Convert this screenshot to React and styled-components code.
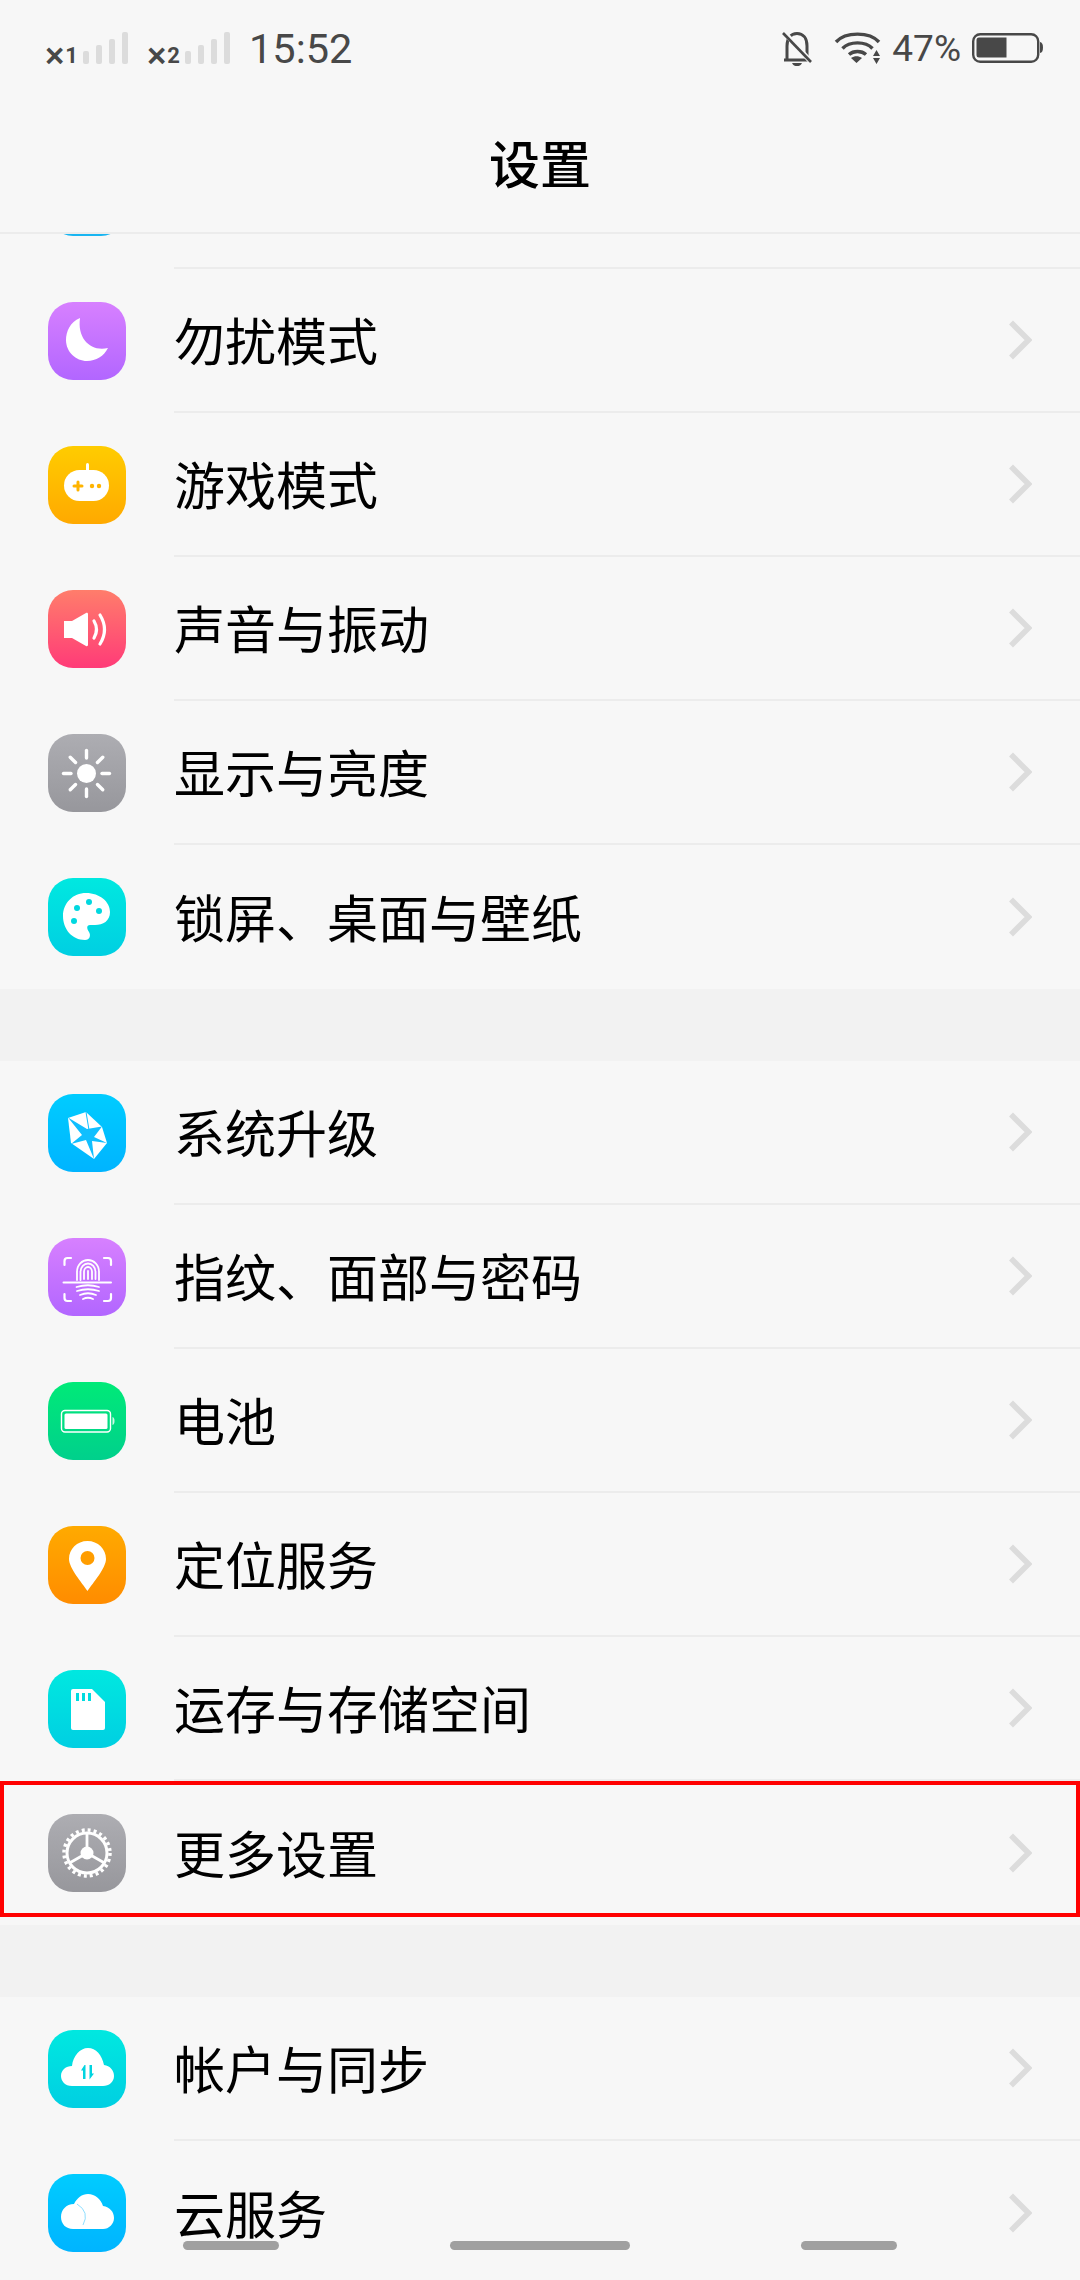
import React from 'react'
import styled, { createGlobalStyle } from 'styled-components'

const GlobalStyle = createGlobalStyle`
  html, body {
    margin: 0;
    padding: 0;
    background: #f7f7f7;
  }
  * {
    box-sizing: border-box;
  }
`

const Phone = styled.div`
  position: relative;
  width: 1080px;
  height: 2280px;
  overflow: hidden;
  display: flex;
  flex-direction: column;
  background: #f7f7f7;
  font-family: "Noto Sans CJK SC", "Noto Sans", sans-serif;
`
const StatusBar = styled.div`
  height: 96px;
  flex: none;
  display: flex;
  justify-content: space-between;
  align-items: flex-start;
  padding: 32px 37px 0 45px;
  color: #484848;
  font-family: Roboto, "Liberation Sans", sans-serif;
`
const StatusLeft = styled.div`
  display: flex;
  align-items: flex-end;
  height: 32px;
`
const StatusRight = styled.div`
  display: flex;
  align-items: flex-start;
  height: 34px;
`
const SimLabel = styled.span`
  display: flex;
  align-items: flex-end;
  width: 38px;
  height: 17px;
  font-size: 22px;
  font-weight: 700;
  line-height: 17px;
  white-space: nowrap;
  color: #484848;
`
const SimCross = styled.span`
  font-family: "Liberation Sans", sans-serif;
  font-size: 33px;
  line-height: 17px;
  margin-right: 1px;
`
const Bars = styled.div`
  display: flex;
  align-items: flex-end;
  gap: 7px;
  height: 32px;
  margin-right: 19px;
`
const Bar = styled.i`
  display: block;
  width: 6px;
  height: ${props => props.h}px;
  border-radius: 2px;
  background: #dcdcdc;
`
const Clock = styled.span`
  font-size: 41.5px;
  line-height: 32px;
  margin-bottom: -1px;
`
const Percent = styled.span`
  font-size: 37px;
  line-height: 34px;
  margin: 0 11px 0 11px;
`
const BellIcon = styled.svg`
  width: 32px;
  height: 34px;
  margin-right: 21px;
`
const WifiIcon = styled.svg`
  width: 47px;
  height: 32px;
`
const BatteryIcon = styled.svg`
  width: 71px;
  height: 30px;
  margin-top: 1px;
`
const Header = styled.header`
  height: 138px;
  flex: none;
  display: flex;
  align-items: center;
  justify-content: center;
  padding-bottom: 5px;
  border-bottom: 2px solid #ececec;
`
const Title = styled.h1`
  margin: 0;
  font-size: 51px;
  font-weight: 500;
  color: #000;
`
const Scroller = styled.main`
  flex: 1;
  overflow: hidden;
`
const List = styled.div`
  margin-top: -109px;
`
const Gap = styled.div`
  height: 72px;
  background: #f2f2f2;
`
const Row = styled.div`
  position: relative;
  height: 144px;
  display: flex;
  align-items: center;
  padding-left: 48px;
`
const IconTile = styled.div`
  flex: none;
  width: 78px;
  height: 78px;
  border-radius: 25px;
  background: linear-gradient(180deg, ${props => props.from}, ${props => props.to});
  svg {
    display: block;
    width: 78px;
    height: 78px;
  }
`
const RowBody = styled.div`
  align-self: stretch;
  flex: 1;
  margin-left: 48px;
  padding-right: 48px;
  display: flex;
  align-items: center;
  justify-content: space-between;
  border-bottom: ${props => props.last ? 'none' : '2px solid #ececec'};
`
const Label = styled.span`
  font-size: 51px;
  font-weight: 400;
  line-height: 60px;
  margin-top: -3px;
  color: #000;
`
const Chevron = styled.svg`
  width: 24px;
  height: 40px;
  flex: none;
`
const Highlight = styled.div`
  position: absolute;
  left: 0;
  right: 0;
  top: 0;
  height: 136px;
  border: 4px solid #f00;
  pointer-events: none;
`
const NavHints = styled.div`
  position: absolute;
  left: 183px;
  right: 183px;
  bottom: 30px;
  display: flex;
  justify-content: space-between;
`
const NavHint = styled.span`
  display: block;
  width: ${props => props.w}px;
  height: 9px;
  border-radius: 5px;
  background: #a0a0a0;
`

const Moon = () => (
  <svg viewBox="0 0 78 78">
    <path fill="#fff" d="M32 16C22 20 18 30 18 38C18 50 28 59 39 59C48 59 56 54 60 46C43 50 29 37 32 16Z" />
  </svg>
)

const Gamepad = () => (
  <svg viewBox="0 0 78 78">
    <rect x="38" y="17" width="3" height="9" rx="1.5" fill="#fff" />
    <rect x="16" y="24" width="45" height="31" rx="15.5" fill="#fff" />
    <path stroke="#ffb400" strokeWidth="3" strokeLinecap="round" d="M26 40H34M30 36V44" />
    <circle cx="44" cy="40" r="2.2" fill="#ffb400" />
    <circle cx="51" cy="40" r="2.2" fill="#ffb400" />
  </svg>
)

const Speaker = () => (
  <svg viewBox="0 0 78 78">
    <path fill="#fff" d="M16 31H24L38 23C39 22.500 40 23 40 24V55C40 56 39 56.500 38 56L24 48H16Z" />
    <path fill="none" stroke="#fff" strokeWidth="3.200" strokeLinecap="round" d="M46 31Q51 39.500 46 48M52 25Q61 39.500 52 54" />
  </svg>
)

const Sun = () => {
  const rays = [0, 45, 90, 135, 180, 225, 270, 315]
  return (
    <svg viewBox="0 0 78 78">
      <circle cx="38.500" cy="39.500" r="9.500" fill="#fff" />
      {rays.map(r => (
        <path
          key={r}
          transform={`rotate(${r} 38.500 39.500)`}
          stroke="#fff"
          strokeWidth="3.400"
          strokeLinecap="round"
          d="M38.500 24V16.500"
        />
      ))}
    </svg>
  )
}

const Palette = () => (
  <svg viewBox="0 0 78 78">
    <path fill="#fff" d="M38 15C52 15 62 24 62 34C62 43 55 47 47 47H42C38 47 39 51 41 54C43 57 42 62 37 62C24 62 15 51 15 38C15 25 25 15 38 15Z" />
    <circle cx="29" cy="30" r="3" fill="#00d8e0" />
    <circle cx="41" cy="24" r="3" fill="#00d8e0" />
    <circle cx="51" cy="33" r="3" fill="#00d8e0" />
    <circle cx="26" cy="43" r="3" fill="#00d8e0" />
  </svg>
)

const Crystal = () => (
  <svg viewBox="0 0 78 78">
    <path fill="#fff" d="M20 24L38 18L54 33L59 49L46 65L23 49Z" />
    <path fill="#10bfff" d="M20 23.500L39 35L54 32.500L46 43L59 49L44 47L46 65L38 46L23 50L34 41Z" />
    <path stroke="#10bfff" strokeWidth="1" d="M38 18L41 36" />
  </svg>
)

const Fingerprint = () => (
  <svg viewBox="0 0 78 78">
    <g fill="none" stroke="#fff" strokeWidth="1.800" strokeLinecap="round">
      <path strokeWidth="2.200" d="M16.500 27V23Q16.500 20 19.500 20H23M56 20H60Q63 20 63 23V27M16.500 56V60Q16.500 63 19.500 63H23M56 63H60Q63 63 63 60V56" />
      <path strokeWidth="2" d="M15.500 44.500H63" />
      <path d="M29 42V34C29 27 34 22 40 22C46 22 51 27 51 34V42" />
      <path d="M32.500 42V34C32.500 29 36 25.500 40 25.500C44 25.500 47.500 29 47.500 34V41" />
      <path d="M36 41V34C36 31 38 29 40 29C42 29 44 31 44 34V41" />
      <path d="M40 33V41" />
      <path d="M28.500 49Q40 45.500 51 49M29 53Q40 49.500 51 53M32 57Q40 53.500 48 57M35 61Q40 58.500 45 61" />
    </g>
  </svg>
)

const BatteryTile = () => (
  <svg viewBox="0 0 78 78">
    <rect x="13.500" y="28.500" width="49" height="21.500" rx="3.500" fill="none" stroke="#fff" strokeWidth="1.400" />
    <rect x="16.500" y="31.500" width="43" height="15.500" rx="1.500" fill="#fff" />
    <path fill="#fff" opacity="0.800" d="M64.500 35C66 35.500 66.500 37 66.500 39C66.500 41 66 42.500 64.500 43Z" />
  </svg>
)

const Pin = () => (
  <svg viewBox="0 0 78 78">
    <path fill="#fff" d="M39.500 15C29 15 21 23 21 33C21 42 34 57 39.500 65C45 57 58 42 58 33C58 23 50 15 39.500 15Z" />
    <circle cx="39.500" cy="32" r="7" fill="#ff9d00" />
  </svg>
)

const SdCard = () => (
  <svg viewBox="0 0 78 78">
    <path fill="#fff" d="M25 19H44L57 32V58Q57 60 55 60H25Q23 60 23 58V21Q23 19 25 19Z" />
    <path fill="#00dce0" d="M28 23H31V31H28ZM34 23H37V31H34ZM40 23H43V31H40Z" />
  </svg>
)

const Gear = () => (
  <svg viewBox="0 0 78 78">
    <g fill="none" stroke="#fff">
      <circle cx="39" cy="39" r="23" strokeWidth="3.500" strokeDasharray="3 3.020" />
      <circle cx="39" cy="39" r="20" strokeWidth="3" />
      <path strokeWidth="2.800" d="M39 39V19M39 39L21.500 49M39 39L56.500 49" />
    </g>
    <circle cx="39" cy="39" r="6.500" fill="#fff" />
  </svg>
)

const cloud = 'M24 56C17 56 13 51 13 46C13 40 18 36 24 36C25 26 32 18 40 18C48 18 54 25 56 35C62 36 66 40 66 46C66 52 61 56 55 56Z'

const CloudSync = () => (
  <svg viewBox="0 0 78 78">
    <path fill="#fff" d={cloud} />
    <path fill="#00d4e0" d="M36.500 35L33 40.500H35V49H37.500V35ZM41.500 35H44V43.500H46L41.500 49.500Z" />
  </svg>
)

const CloudMoon = () => (
  <svg viewBox="0 0 78 78">
    <path fill="#fff" d="M25 55C18 55 13 50 13 43C13 36 18 30 26 30C29 24 34 20 40 20C47 20 53 25 55 32C62 33 66 38 66 44C66 50 61 55 55 55Z" />
    <path fill="none" stroke="#8fdfff" strokeWidth="1" d="M29 30Q42 38 35 51" />
  </svg>
)

const rows1 = [
  { label: '勿扰模式', from: '#d780ff', to: '#b266ff', Icon: Moon },
  { label: '游戏模式', from: '#ffcc00', to: '#ffa900', Icon: Gamepad },
  { label: '声音与振动', from: '#ff7d6b', to: '#ff3b78', Icon: Speaker },
  { label: '显示与亮度', from: '#adadb2', to: '#97979c', Icon: Sun },
  { label: '锁屏、桌面与壁纸', from: '#00e8e0', to: '#00cfe2', Icon: Palette },
]
const rows2 = [
  { label: '系统升级', from: '#00ccff', to: '#00b4ff', Icon: Crystal },
  { label: '指纹、面部与密码', from: '#d780ff', to: '#b266ff', Icon: Fingerprint },
  { label: '电池', from: '#00ea78', to: '#00d08c', Icon: BatteryTile },
  { label: '定位服务', from: '#ffaa00', to: '#ff8c00', Icon: Pin },
  { label: '运存与存储空间', from: '#00e8e0', to: '#00cfe2', Icon: SdCard },
  { label: '更多设置', from: '#adadb2', to: '#97979c', Icon: Gear, marked: true },
]
const rows3 = [
  { label: '帐户与同步', from: '#00e8e0', to: '#00cfe2', Icon: CloudSync },
  { label: '云服务', from: '#00ccff', to: '#00b4ff', Icon: CloudMoon },
]

const SettingRow = ({ item, last }) => {
  const { label, from, to, Icon, marked } = item
  return (
    <Row>
      <IconTile from={from} to={to}>
        {Icon && <Icon />}
      </IconTile>
      <RowBody last={last}>
        <Label>{label}</Label>
        <Chevron viewBox="0 0 24 40">
          <polyline points="3,2.500 20.500,20 3,37.500" fill="none" stroke="#dcdcdc" strokeWidth="5.500" />
        </Chevron>
      </RowBody>
      {marked && <Highlight />}
    </Row>
  )
}

const Signal = ({ sim }) => (
  <>
    <SimLabel><SimCross>×</SimCross>{sim}</SimLabel>
    <Bars>
      <Bar h={13} />
      <Bar h={19} />
      <Bar h={25} />
      <Bar h={32} />
    </Bars>
  </>
)

export default function App() {
  return (
    <Phone>
      <GlobalStyle />
      <StatusBar>
        <StatusLeft>
          <Signal sim="1" />
          <Signal sim="2" />
          <Clock>15:52</Clock>
        </StatusLeft>
        <StatusRight>
          <BellIcon viewBox="0 0 32 34">
            <path fill="none" stroke="#484848" strokeWidth="3" d="M3 28H29M6 27V14C6 6 10 1.500 16 1.500C22 1.500 26 6 26 14V25" />
            <path fill="#484848" d="M11 31H21C20 33.500 18 34 16 34C14 34 12 33.500 11 31Z" />
            <path stroke="#f7f7f7" strokeWidth="5" d="M2 -1L32 32" />
            <path stroke="#484848" strokeWidth="2.600" d="M2 1L30 30" />
          </BellIcon>
          <WifiIcon viewBox="0 0 46 32">
            <path fill="none" stroke="#484848" strokeWidth="3.400" d="M1.500 10C11 -0.500 35 -0.500 44.500 10M8 16.500C15 9 31 9 38 16.500M14.500 22.500C19 18.500 27 18.500 31.500 22.500" />
            <path fill="#484848" d="M22 31L16.500 26C20 23.500 24 23.500 27.500 26ZM42 18L45.500 24H38.500ZM42 32L38.500 26H45.500Z" />
          </WifiIcon>
          <Percent>47%</Percent>
          <BatteryIcon viewBox="0 0 71 30">
            <rect x="1.200" y="1.200" width="65" height="27.600" rx="7" fill="none" stroke="#484848" strokeWidth="2.400" />
            <path fill="#484848" d="M7 4.500H34.500V24.500H7Q4.500 24.500 4.500 22V7Q4.500 4.500 7 4.500Z" />
            <path fill="#484848" d="M68 9C70 9.500 71 11 71 14.500C71 18 70 19.500 68 20Z" />
          </BatteryIcon>
        </StatusRight>
      </StatusBar>
      <Header>
        <Title>设置</Title>
      </Header>
      <Scroller>
        <List>
          <SettingRow item={{ label: '', from: '#19b5f1', to: '#19b5f1' }} />
          {rows1.map((r, i) => <SettingRow key={r.label} item={r} last={i === rows1.length - 1} />)}
          <Gap />
          {rows2.map((r, i) => <SettingRow key={r.label} item={r} last={i === rows2.length - 1} />)}
          <Gap />
          {rows3.map((r, i) => <SettingRow key={r.label} item={r} last={i === rows3.length - 1} />)}
        </List>
      </Scroller>
      <NavHints>
        <NavHint w={96} />
        <NavHint w={180} />
        <NavHint w={96} />
      </NavHints>
    </Phone>
  )
}
